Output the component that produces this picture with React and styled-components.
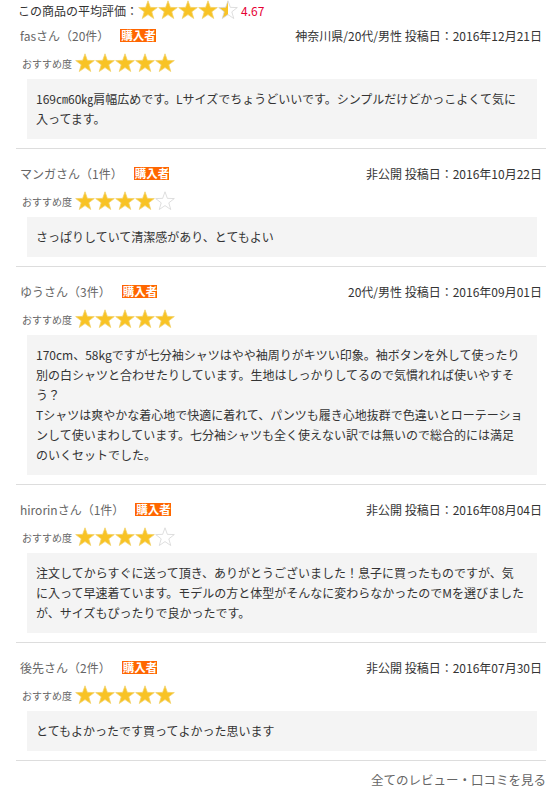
import React from "react";
import styled, { createGlobalStyle } from "styled-components";

const GlobalStyle = createGlobalStyle`
  body {
    margin: 0;
    background: #fff;
    font-family: "Noto Sans CJK JP", "Noto Sans", sans-serif;
    color: #333;
  }
`;

const reviews = [
  {
    name: "fasさん（20件）",
    meta: "神奈川県/20代/男性 投稿日：2016年12月21日",
    rating: 5,
    text: "169㎝60㎏肩幅広めです。Lサイズでちょうどいいです。シンプルだけどかっこよくて気に\n入ってます。",
  },
  {
    name: "マンガさん（1件）",
    meta: "非公開 投稿日：2016年10月22日",
    rating: 4,
    text: "さっぱりしていて清潔感があり、とてもよい",
  },
  {
    name: "ゆうさん（3件）",
    meta: "20代/男性 投稿日：2016年09月01日",
    rating: 5,
    text:
      "170cm、58kgですが七分袖シャツはやや袖周りがキツい印象。袖ボタンを外して使ったり\n別の白シャツと合わせたりしています。生地はしっかりしてるので気慣れれば使いやすそ\nう？\nTシャツは爽やかな着心地で快適に着れて、パンツも履き心地抜群で色違いとローテーショ\nンして使いまわしています。七分袖シャツも全く使えない訳では無いので総合的には満足\nのいくセットでした。",
  },
  {
    name: "hirorinさん（1件）",
    meta: "非公開 投稿日：2016年08月04日",
    rating: 4,
    text:
      "注文してからすぐに送って頂き、ありがとうございました！息子に買ったものですが、気\nに入って早速着ています。モデルの方と体型がそんなに変わらなかったのでMを選びました\nが、サイズもぴったりで良かったです。",
  },
  {
    name: "後先さん（2件）",
    meta: "非公開 投稿日：2016年07月30日",
    rating: 5,
    text: "とてもよかったです買ってよかった思います",
  },
];

const Page = styled.div`
  width: 530px;
  margin-left: 16px;
`;

const Summary = styled.div`
  display: flex;
  align-items: center;
  height: 20px;
  padding-left: 2px;
  font-size: 12px;
  color: #333;
`;

const Average = styled.span`
  margin-left: 3px;
  color: #e60033;
  font-size: 12px;
`;

const List = styled.div``;

const Review = styled.div`
  padding: 14px 0 9px;
  border-bottom: 1px solid #dddddd;
  &:first-child {
    padding-top: 5px;
  }
`;

const Header = styled.div`
  display: flex;
  align-items: center;
  justify-content: space-between;
  height: 20px;
  padding: 0 4px;
`;

const Reviewer = styled.div`
  display: flex;
  align-items: center;
  font-size: 12px;
  color: #666;
`;

const Badge = styled.span`
  margin-left: 11px;
  padding: 0 0 0 1px;
  background: #ff6600;
  color: #fff;
  font-weight: bold;
  font-size: 11.5px;
  line-height: 13px;
  height: 13px;
`;

const Meta = styled.div`
  font-size: 12px;
  color: #333;
`;

const RecRow = styled.div`
  display: flex;
  align-items: center;
  gap: 3px;
  height: 20px;
  margin-top: 8px;
  padding-left: 6px;
`;

const RecLabel = styled.span`
  font-size: 10px;
  color: #666;
`;

const Stars = styled.span`
  display: inline-flex;
  svg {
    display: block;
  }
`;

const Body = styled.div`
  margin: 6px 9px 0 11px;
  padding: 10px 9px;
  background: #f4f4f4;
  font-size: 12px;
  line-height: 20px;
  color: #333;
  white-space: pre;
`;

const Footer = styled.div`
  margin-top: 9px;
  text-align: right;
  font-size: 12.5px;
  line-height: 20px;
  color: #666;
`;

const STAR =
  "10,0.8 12.35,7.36 19.32,7.57 13.8,11.84 15.76,18.53 10,14.6 4.24,18.53 6.2,11.84 0.68,7.57 7.65,7.36";

function Star({ fill, size = 20 }) {
  // fill: 1 full, 0.5 half, 0 empty
  const id = "half-star";
  const color =
    fill === 1 ? "#f8c325" : fill === 0 ? "#fff" : `url(#${id})`;
  return (
    <svg width={size} height={size} viewBox="0 0 20 20">
      {fill === 0.5 && (
        <defs>
          <linearGradient id={id} x1="0" x2="1" y1="0" y2="0">
            <stop offset="52%" stopColor="#f8c325" />
            <stop offset="52%" stopColor="#fff" />
          </linearGradient>
        </defs>
      )}
      <polygon
        points={STAR}
        fill={color}
        stroke={fill === 1 ? "#f3d36e" : "#d6d6d6"}
        strokeWidth="0.8"
        strokeLinejoin="round"
      />
    </svg>
  );
}

function StarRating({ value }) {
  return (
    <Stars>
      {[0, 1, 2, 3, 4].map((i) => {
        const f = value - i >= 1 ? 1 : value - i >= 0.5 ? 0.5 : 0;
        return <Star key={i} fill={f} />;
      })}
    </Stars>
  );
}

export default function App() {
  return (
    <>
      <GlobalStyle />
      <Page>
        <Summary>
          この商品の平均評価：
          <StarRating value={4.5} />
          <Average>4.67</Average>
        </Summary>
        <List>
          {reviews.map((r) => (
            <Review key={r.name}>
              <Header>
                <Reviewer>
                  {r.name}
                  <Badge>購入者</Badge>
                </Reviewer>
                <Meta>{r.meta}</Meta>
              </Header>
              <RecRow>
                <RecLabel>おすすめ度</RecLabel>
                <StarRating value={r.rating} />
              </RecRow>
              <Body>{r.text}</Body>
            </Review>
          ))}
        </List>
        <Footer>全てのレビュー・口コミを見る</Footer>
      </Page>
    </>
  );
}
